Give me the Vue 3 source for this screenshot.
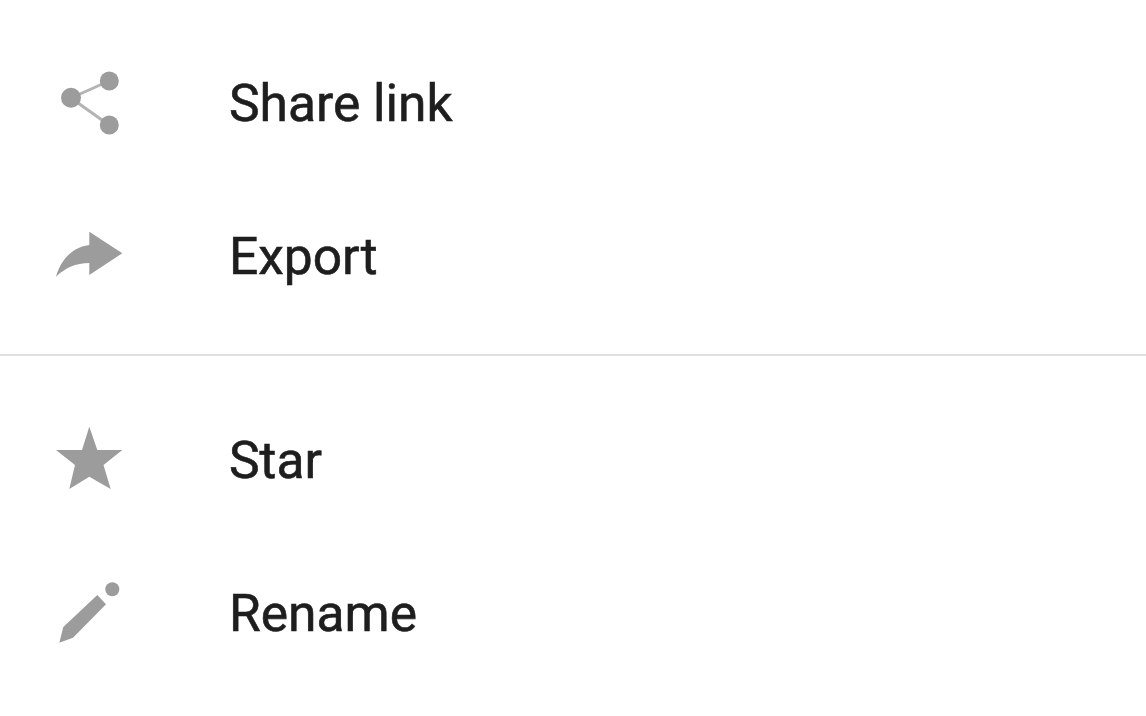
<template>
  <div class="sheet">
    <ul class="group">
      <li class="row">
        <svg class="ic" viewBox="0 0 80 80">
          <path class="link" d="M21 35 59 18M21 35 59 62" />
          <circle cx="21" cy="34.7" r="10" />
          <circle cx="59.3" cy="18" r="9.5" />
          <circle cx="59.3" cy="62" r="9.5" />
        </svg>
        <span class="label">Share link</span>
      </li>
      <li class="row">
        <svg class="ic" viewBox="0 0 80 80">
          <path d="M39.3 15.7 72.3 37.3 39.3 59V47C26 47 15 52 6 60.7 11 43 23 31 39.3 29Z" />
        </svg>
        <span class="label">Export</span>
      </li>
    </ul>
    <hr class="sep" />
    <ul class="group">
      <li class="row">
        <svg class="ic" viewBox="0 0 80 80">
          <path d="M39.3 6.7 47.3 30H72.3L53.5 45 60.7 69 39.3 56.7 19.3 69 25 45 6 30H32Z" />
        </svg>
        <span class="label">Star</span>
      </li>
      <li class="row">
        <svg class="ic" viewBox="0 0 80 80">
          <path d="M9.3 69.7 13.3 54 47.3 22 56 31.3 23 64.7Z" />
          <circle cx="62.3" cy="16.3" r="7" />
        </svg>
        <span class="label">Rename</span>
      </li>
    </ul>
  </div>
</template>

<script setup>
</script>

<style>
html, body { background: #fff; }
</style>

<style scoped>
.sheet {
  width: 1146px;
  height: 716px;
  background: #fff;
  color: #1e1e1e;
  font-family: Roboto, "Liberation Sans", sans-serif;
  font-size: 51.5px;
  -webkit-text-stroke: 0.6px #1e1e1e;
  filter: blur(0.7px);
  overflow: hidden;
  padding-top: 26px;
  box-sizing: border-box;
}
.group { list-style: none; margin: 0; padding: 0; }
.row { display: flex; align-items: center; height: 153px; padding-left: 50px; }
.ic { width: 80px; height: 80px; fill: #9c9c9c; margin-right: 99px; flex: none; }
.label { padding-top: 2px; }
.link { fill: none; stroke: #b4b4b4; stroke-width: 3; }
.sep { border: 0; border-top: 2px solid #e0e0e0; margin: 22px 0 27px; }
</style>
